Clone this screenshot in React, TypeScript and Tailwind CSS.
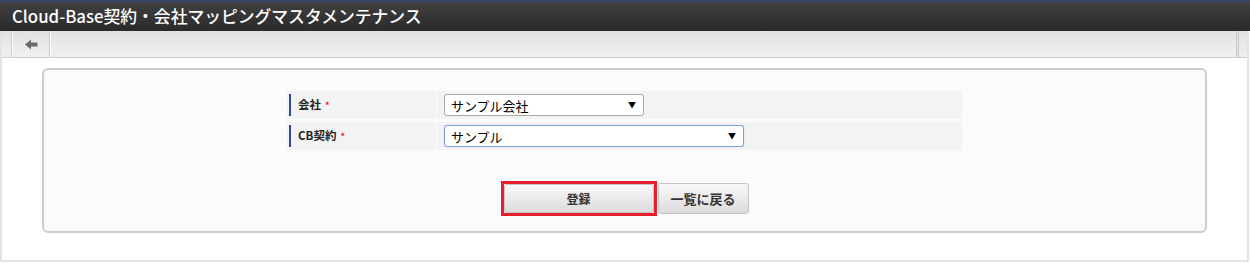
const font = "font-['Noto_Sans_CJK_JP','Noto_Sans',sans-serif]";

function Required() {
  return <span className="ml-[4px] align-top text-[9px] leading-none text-[#e02020]">*</span>;
}

function Select({ value, width, focused }: { value: string; width: string; focused?: boolean }) {
  return (
    <div
      className={`flex h-[22px] ${width} items-center justify-between rounded-[3px] border bg-white pl-[6px] pr-[7px] ${
        focused ? "border-[#7d9de0] shadow-[0_0_1px_#9fb6ea]" : "border-[#a9a9a9]"
      }`}
    >
      <span className="text-[13px] leading-none text-black">{value}</span>
      <span className="text-[8px] leading-none text-black">▼</span>
    </div>
  );
}

function Row({ label, children }: { label: string; children: React.ReactNode }) {
  return (
    <div className="flex h-[28px] bg-[#f3f3f3]">
      <div className="flex w-[150px] items-center border-r border-white py-[3px] pl-[2px]">
        <div className="flex h-full items-center border-l-2 border-[#2b4b9b] pl-[7px] text-[11.5px] font-bold text-[#222]">
          {label}
          <Required />
        </div>
      </div>
      <div className="flex flex-1 items-center pl-[7px]">{children}</div>
    </div>
  );
}

export default function App() {
  return (
    <div className={`w-[1250px] h-[263px] bg-white ${font}`}>
      <div className="h-[31px] border-t-2 border-[#33456a] bg-gradient-to-b from-[#404040] to-[#2a2a2a] pl-[12px]">
        <h1 className="text-[16.8px] font-medium leading-[28px] text-white">
          Cloud-Base契約・会社マッピングマスタメンテナンス
        </h1>
      </div>
      <div className="h-[231px] w-[1249px] border-x-2 border-b-2 border-[#e2e2e2]">
        <div className="flex h-[27px] border-b border-[#cfcfcf] bg-gradient-to-b from-[#e2e2e2] to-[#f0f0f0]">
          <div className="w-[10px] border-r border-[#c8c8c8]" />
          <div className="flex w-[38px] items-center justify-center border-x border-l-white border-r-[#c8c8c8]">
            <svg width="13" height="11" viewBox="0 0 13 11">
              <path d="M0 5.5 L6 0.5 L6 3.5 L12.5 3.5 L12.5 7.5 L6 7.5 L6 10.5 Z" fill="#6a6a6a" />
            </svg>
          </div>
          <div className="flex-1 border-l border-white" />
          <div className="w-[3px] border-x border-[#c8c8c8] bg-[#e6e6e6]" />
          <div className="w-[8px]" />
        </div>
        <div className="px-[40px] pt-[10px]">
          <div className="h-[165px] rounded-[6px] border-2 border-[#cdcdcd] bg-[#fbfbfd] pt-[21px]">
            <div className="mx-auto flex w-[675px] flex-col gap-[3px]">
              <Row label="会社">
                <Select value="サンプル会社" width="w-[200px]" />
              </Row>
              <Row label="CB契約">
                <Select value="サンプル" width="w-[300px]" focused />
              </Row>
            </div>
            <div className="mt-[31px] flex justify-center">
              <div className="flex items-center">
                <div className="border-[3px] border-[#e3202b]">
                  <button className="h-[29px] w-[150px] rounded-[2px] border border-[#c4c4c4] bg-gradient-to-b from-[#f8f8f8] to-[#dcdcdc] text-[12px] font-bold text-[#333]">
                    登録
                  </button>
                </div>
                <button className="ml-[1px] h-[31px] w-[91px] rounded-[3px] border border-[#c4c4c4] bg-gradient-to-b from-[#f8f8f8] to-[#dcdcdc] text-[13px] font-bold text-[#333]">
                  一覧に戻る
                </button>
              </div>
            </div>
          </div>
        </div>
      </div>
    </div>
  );
}
